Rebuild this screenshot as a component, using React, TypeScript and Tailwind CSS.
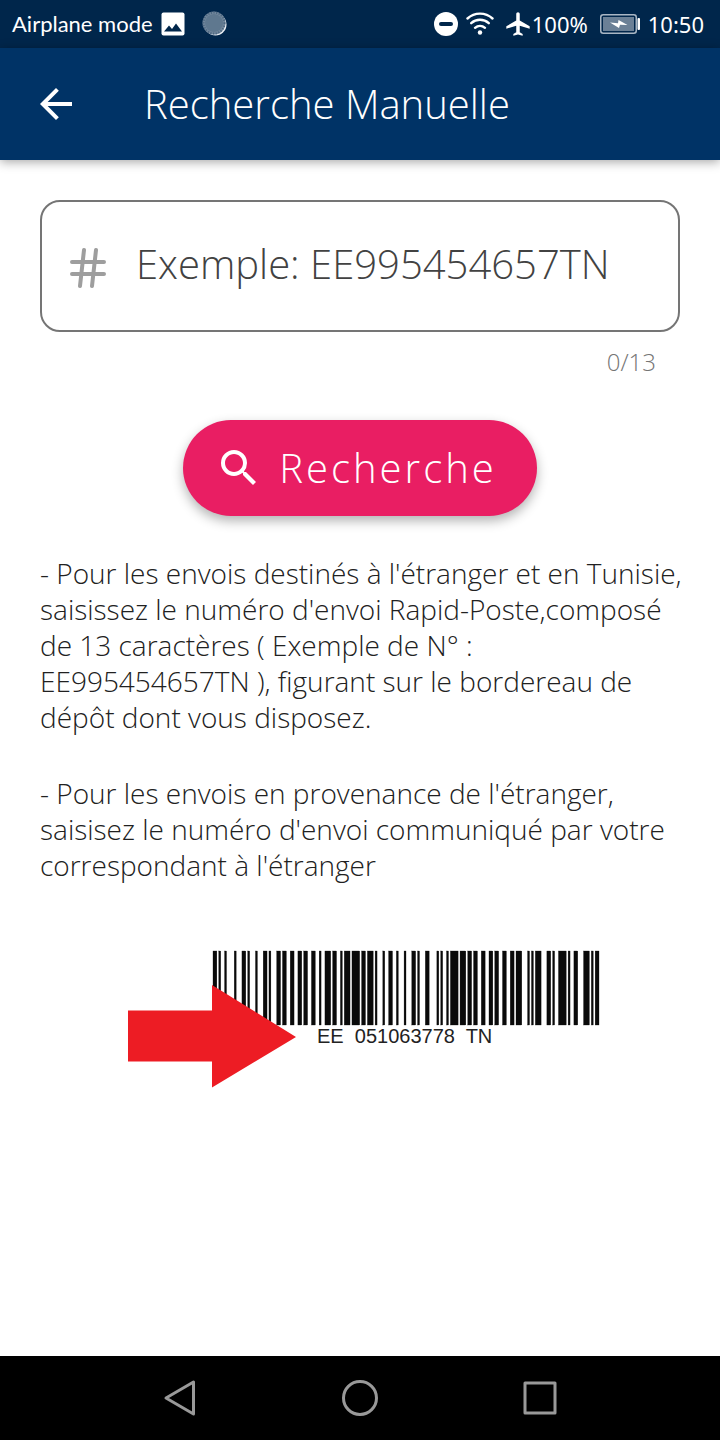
import { useState } from "react";
import { MdAirplanemodeActive, MdArrowBack, MdSearch } from "react-icons/md";

const MAX_LENGTH = 13;
const MODULE = 1.93;

// Code 128 symbols: alternating bar and space widths, in modules.
const SYMBOLS = [
  "211214", // start B
  "132113", // E
  "132113", // E
  "212222",
  "212222",
  "123122", // 0
  "113141", // code C
  "213113", // 51
  "122213", // 06
  "132113", // 37
  "241112", // 78
  "114131", // code B
  "212222",
  "212222",
  "213311", // T
  "113321", // N
  "124112", // checksum
  "2331112", // stop
];

function barcodeBars() {
  const bars: { x: number; w: number }[] = [];
  let x = 0;
  SYMBOLS.join("")
    .split("")
    .forEach((d, i) => {
      const w = Number(d) * MODULE;
      if (i % 2 === 0) bars.push({ x, w });
      x += w;
    });
  return bars;
}

function StatusBar() {
  return (
    <div className="flex h-12 items-center justify-between bg-[#00264b] pr-4 pl-3 font-['Lato',sans-serif] text-[22px] leading-6 font-normal text-white">
      <div className="flex items-center">
        <span>Airplane mode</span>
        <svg className="ml-2 size-6" viewBox="0 0 24 24" aria-hidden="true">
          <rect x="0.5" y="0.5" width="23" height="23" rx="2" fill="#fff" />
          <path d="M3 19.500 8 13.500l3 3.500L15 11.500l6 8z" fill="#00264b" />
        </svg>
        <svg className="ml-4 size-7" viewBox="0 0 28 28" aria-hidden="true">
          <circle cx="14.500" cy="14.500" r="11" fill="#e8edf2" />
          <circle cx="13" cy="13" r="11.500" fill="#71869b" />
          <circle cx="13" cy="13" r="10.500" fill="none" stroke="#4c6781" strokeWidth="2" strokeDasharray="1.2 1.500" />
          <circle cx="13" cy="13" r="9" fill="#5f788f" />
        </svg>
      </div>
      <div className="flex items-center">
        <svg className="size-6" viewBox="0 0 24 24" aria-hidden="true">
          <circle cx="12" cy="12" r="12" fill="#fff" />
          <path d="M7 12h10" stroke="#00264b" strokeWidth="4" strokeLinecap="round" />
        </svg>
        <svg className="ml-2 h-6 w-7" viewBox="0 0 28 24" fill="none" stroke="#fff" strokeWidth="2.400" strokeLinecap="round" aria-hidden="true">
          <path d="M1.500 6.500C8.500 0 19.500 0 26.500 6.500" />
          <path d="M5.200 11.200c5-4.600 12.600-4.600 17.600 0" />
          <path d="M9 15.800c3-2.600 7-2.600 10 0" />
          <circle cx="14" cy="20.500" r="2.200" fill="#fff" stroke="none" />
        </svg>
        <MdAirplanemodeActive className="ml-2.5 size-7" aria-hidden="true" />
        <span className="font-['Noto_Sans',sans-serif]">100%</span>
        <svg className="ml-3 h-5 w-10" viewBox="0 0 40 20" aria-hidden="true">
          <rect x="0.75" y="0.75" width="35.500" height="18.500" rx="2.500" fill="none" stroke="#a9b6c4" strokeWidth="1.500" />
          <rect x="3" y="3" width="31" height="14" fill="#6b8096" />
          <path d="M10 8.500 18 9.300 18.500 6 27.500 11 20 10.800 19 14z" fill="#fff" />
          <rect x="37.500" y="4" width="2.500" height="12" rx="1" fill="#fff" />
        </svg>
        <span className="ml-2 font-['Noto_Sans',sans-serif]">10:50</span>
      </div>
    </div>
  );
}

function HashIcon() {
  return (
    <svg className="mt-1 h-10 w-9 shrink-0" viewBox="0 0 36 40" fill="none" stroke="#9e9e9e" strokeWidth="4" strokeLinecap="round" aria-hidden="true">
      <path d="M2 14h32M2 26h32M14 2l-4 36M26 2l-4 36" />
    </svg>
  );
}

function TrackingIllustration() {
  return (
    <svg className="mx-auto mt-16 h-auto w-[478px] max-w-full" viewBox="123 947 478 144" role="img" aria-label="EE 051063778 TN">
      <g fill="#0a0a0a" stroke="#0a0a0a" strokeWidth="0.3">
        {barcodeBars().map((b) => (
          <rect key={b.x} x={213 + b.x} y="951" width={b.w} height="74" />
        ))}
      </g>
      <path d="M128 1010.500h84V985l84 52-84 50.500v-26h-84z" fill="#ed1c24" />
      <text x="317" y="1043" fontSize="20" fill="#222" className="font-['Liberation_Sans',Arial,sans-serif] font-normal whitespace-pre">
        {"EE  051063778  TN"}
      </text>
    </svg>
  );
}

export default function App() {
  const [code, setCode] = useState("");
  return (
    <div className="flex min-h-screen flex-col bg-white font-['Open_Sans',sans-serif] font-light">
      <StatusBar />
      <header className="flex h-28 items-center bg-[#003366] pl-8 text-white shadow-[0_2px_10px_rgba(0,0,0,0.35)]">
        <button type="button" aria-label="Retour" className="size-12">
          <MdArrowBack className="size-12" />
        </button>
        <h1 className="ml-16 text-[40px] leading-12">Recherche Manuelle</h1>
      </header>

      <main className="flex-1 pt-10 pr-9 pl-10">
        <form className="mr-1 flex flex-col" onSubmit={(e) => e.preventDefault()}>
          <div className="flex h-[132px] items-center rounded-[20px] border-2 border-[#757575] px-7">
            <HashIcon />
            <input
              type="text"
              aria-label="Numéro d'envoi"
              maxLength={MAX_LENGTH}
              value={code}
              onChange={(e) => setCode(e.target.value)}
              placeholder="Exemple: EE995454657TN"
              className="ml-7.5 h-16 min-w-0 flex-1 bg-transparent pb-1.5 text-[40px] text-[#424242] outline-none placeholder:text-[#424242]"
            />
          </div>
          <p className="mt-4 mr-6 self-end text-2xl leading-7 text-[#757575]">
            {code.length}/{MAX_LENGTH}
          </p>
          <button
            type="submit"
            className="mt-11 flex h-24 items-center self-center rounded-full bg-[#e91e63] pr-10 pl-8 text-[40px] tracking-[3px] text-white shadow-[0_5px_12px_rgba(0,0,0,0.3)]"
          >
            <MdSearch className="mr-4 size-12" aria-hidden="true" />
            Recherche
          </button>
        </form>

        <div className="mt-[39px] flex flex-col gap-10 text-[28px] leading-9 text-[#212121]">
          <p>
            - Pour les envois destinés à l'étranger et en Tunisie, saisissez le numéro d'envoi
            Rapid-Poste,composé de 13 caractères ( Exemple de N° : EE995454657TN ), figurant sur le
            bordereau de dépôt dont vous disposez.
          </p>
          <p>
            - Pour les envois en provenance de l'étranger, saisisez le numéro d'envoi communiqué par
            votre correspondant à l'étranger
          </p>
        </div>

        <TrackingIllustration />
      </main>

      <nav className="flex h-21 items-center justify-center gap-33 bg-black">
        <button type="button" aria-label="Précédent" className="size-12">
          <svg className="size-12" viewBox="0 0 48 48" fill="none" stroke="#999" strokeWidth="3" strokeLinejoin="round">
            <path d="M10 24 37.500 8v32z" />
          </svg>
        </button>
        <button type="button" aria-label="Accueil" className="size-12">
          <svg className="size-12" viewBox="0 0 48 48" fill="none" stroke="#999" strokeWidth="3">
            <circle cx="24" cy="24" r="16.500" />
          </svg>
        </button>
        <button type="button" aria-label="Applications récentes" className="size-12">
          <svg className="size-12" viewBox="0 0 48 48" fill="none" stroke="#999" strokeWidth="3" strokeLinejoin="round">
            <path d="M9 9h30v30H9z" />
          </svg>
        </button>
      </nav>
    </div>
  );
}
